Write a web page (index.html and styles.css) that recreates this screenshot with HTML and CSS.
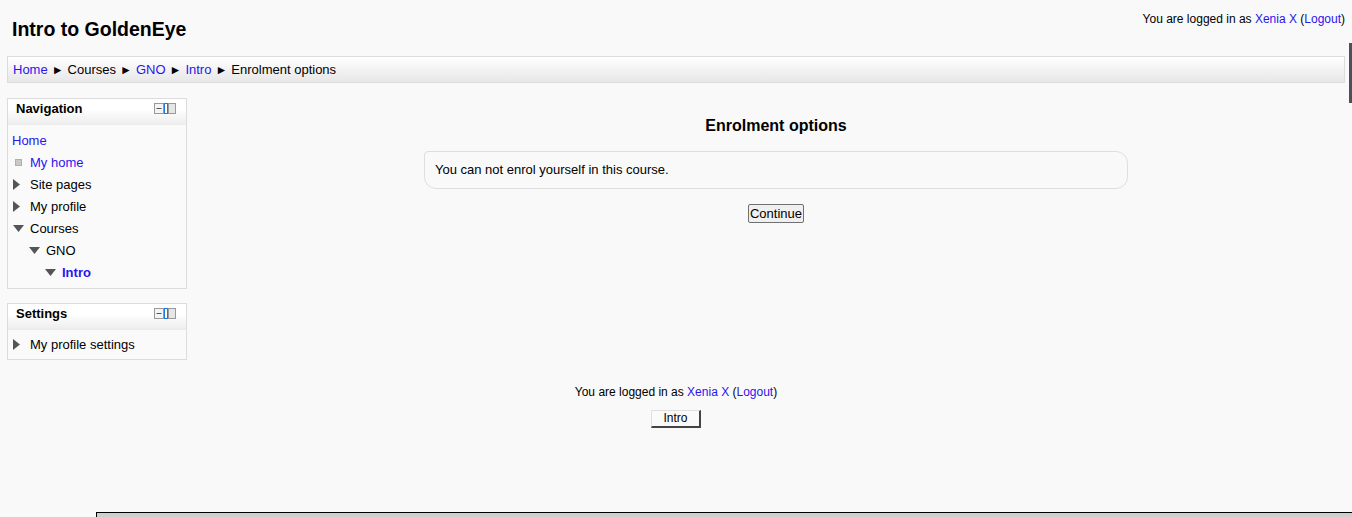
FILE: index.html
```html
<!DOCTYPE html>
<html>
<head>
<meta charset="utf-8">
<title>Intro to GoldenEye</title>
<link rel="stylesheet" href="styles.css">
</head>
<body>
<div class="page">
  <header class="header">
    <h1 class="title">Intro to GoldenEye</h1>
    <div class="login">You are logged in as <a href="#">Xenia X</a> (<a href="#">Logout</a>)</div>
  </header>
  <nav class="crumbs">
    <a href="#">Home</a><span class="sep">►</span><span>Courses</span><span class="sep">►</span><a href="#">GNO</a><span class="sep">►</span><a href="#">Intro</a><span class="sep">►</span><span>Enrolment options</span>
  </nav>
  <div class="content">
    <aside class="side">
      <section class="block">
        <div class="block-head">
          <span class="block-title">Navigation</span>
          <svg class="block-icons" width="23" height="12" viewBox="0 0 23 12"><rect x="0.5" y="0.5" width="9" height="10" fill="#f4f4f4" stroke="#999"/><line x1="2.5" y1="5.5" x2="7.5" y2="5.5" stroke="#555"/><rect x="10.5" y="0.5" width="3" height="10" fill="#fff" stroke="#1f7ae0"/><rect x="14.5" y="0.5" width="7" height="10" fill="#e6e6e6" stroke="#999"/></svg>
        </div>
        <ul class="tree">
          <li class="lvl0"><a href="#">Home</a></li>
          <li class="lvl1"><span class="ico"><span class="sq"></span></span><a href="#">My home</a></li>
          <li class="lvl1"><span class="ico"><svg width="7" height="11" viewBox="0 0 7 11"><path d="M0 0 L7 5.5 L0 11 Z" fill="#555"/></svg></span>Site pages</li>
          <li class="lvl1"><span class="ico"><svg width="7" height="11" viewBox="0 0 7 11"><path d="M0 0 L7 5.5 L0 11 Z" fill="#555"/></svg></span>My profile</li>
          <li class="lvl1"><span class="ico"><svg width="11" height="7" viewBox="0 0 11 7"><path d="M0 0 L11 0 L5.5 7 Z" fill="#555"/></svg></span>Courses</li>
          <li class="lvl2"><span class="ico"><svg width="11" height="7" viewBox="0 0 11 7"><path d="M0 0 L11 0 L5.5 7 Z" fill="#555"/></svg></span>GNO</li>
          <li class="lvl3"><span class="ico"><svg width="11" height="7" viewBox="0 0 11 7"><path d="M0 0 L11 0 L5.5 7 Z" fill="#555"/></svg></span><a href="#" class="current">Intro</a></li>
        </ul>
      </section>
      <section class="block">
        <div class="block-head">
          <span class="block-title">Settings</span>
          <svg class="block-icons" width="23" height="12" viewBox="0 0 23 12"><rect x="0.5" y="0.5" width="9" height="10" fill="#f4f4f4" stroke="#999"/><line x1="2.5" y1="5.5" x2="7.5" y2="5.5" stroke="#555"/><rect x="10.5" y="0.5" width="3" height="10" fill="#fff" stroke="#1f7ae0"/><rect x="14.5" y="0.5" width="7" height="10" fill="#e6e6e6" stroke="#999"/></svg>
        </div>
        <ul class="tree tree-short">
          <li class="lvl1"><span class="ico"><svg width="7" height="11" viewBox="0 0 7 11"><path d="M0 0 L7 5.5 L0 11 Z" fill="#555"/></svg></span>My profile settings</li>
        </ul>
      </section>
    </aside>
    <main class="main">
      <h2 class="heading">Enrolment options</h2>
      <div class="box">You can not enrol yourself in this course.</div>
      <div class="actions"><button class="btn">Continue</button></div>
    </main>
  </div>
  <footer class="footer">
    <div class="footlogin">You are logged in as <a href="#">Xenia X</a> (<a href="#">Logout</a>)</div>
    <div class="homelink"><button class="introbtn">Intro</button></div>
  </footer>
</div>
<div class="scrollthumb"></div>
<div class="dock"></div>
</body>
</html>
```
FILE: styles.css
```css
html, body {
  margin: 0;
  padding: 0;
  background: #f9f9f9;
  height: 517px;
  overflow: hidden;
}
body {
  font-family: "Liberation Sans", Arial, sans-serif;
  font-size: 13px;
  color: #000;
  position: relative;
}
a {
  color: #2a14f0;
  text-decoration: none;
}
.page {
  padding: 0 7px;
}
.header {
  display: flex;
  justify-content: space-between;
  align-items: flex-start;
  height: 56px;
}
.title {
  margin: 17px 0 0 5px;
  font-size: 19.5px;
  line-height: 24px;
  font-weight: bold;
}
.login {
  margin-top: 12px;
  font-size: 12px;
  line-height: 15px;
}
.crumbs {
  height: 25px;
  line-height: 25px;
  border: 1px solid #dcdcdc;
  background: linear-gradient(#ffffff, #e7e7e7);
  padding-left: 5px;
  font-size: 13px;
}
.crumbs .sep {
  margin: 0 4px;
  font-size: 12px;
}
.content {
  display: flex;
  margin-top: 15px;
}
.side {
  width: 180px;
  flex: none;
  display: flex;
  flex-direction: column;
  gap: 14px;
}
.block {
  border: 1px solid #dcdcdc;
  background: #fafafa;
}
.block-head {
  height: 24px;
  display: flex;
  align-items: flex-start;
  justify-content: space-between;
  padding: 2px 9px 0 8px;
  background: linear-gradient(#ffffff 40%, #ececec);
}
.block-title {
  font-weight: bold;
  font-size: 13px;
  line-height: 16px;
}
.block-icons {
  display: block;
  margin-top: 2px;
}
.tree {
  list-style: none;
  margin: 0;
  padding: 4px 0 5px 0;
}
.tree-short {
  padding: 3px 0 4px 0;
}
.tree li {
  display: flex;
  align-items: center;
  height: 22px;
  font-size: 13px;
}
.tree .lvl0 { padding-left: 4px; }
.tree .lvl1 { padding-left: 4px; }
.tree .lvl2 { padding-left: 20px; }
.tree .lvl3 { padding-left: 36px; }
.ico {
  width: 18px;
  flex: none;
  display: flex;
  align-items: center;
  padding-left: 1px;
  box-sizing: border-box;
}
.ico svg { display: block; }
.sq {
  width: 5px;
  height: 5px;
  background: #c8c8c8;
  border: 1px solid #b0b0b0;
  margin-left: 2px;
}
.current {
  font-weight: bold;
}
.main {
  flex: 1;
  padding-left: 20px;
  display: flex;
  flex-direction: column;
  align-items: center;
}
.heading {
  margin: 18px 0 0 0;
  font-size: 16px;
  line-height: 20px;
  font-weight: bold;
}
.box {
  margin-top: 15px;
  width: 692px;
  height: 36px;
  line-height: 36px;
  border: 1px solid #dedede;
  border-radius: 4px 12px 12px 12px;
  padding-left: 10px;
  font-size: 13px;
  background: #f9f9f9;
}
.actions {
  margin-top: 15px;
}
.btn {
  font-family: "Liberation Sans", Arial, sans-serif;
  font-size: 13px;
  height: 19px;
  padding: 0 1px;
  border: 1px solid #707070;
  border-radius: 2px;
  background: #f0f0f0;
  color: #000;
  line-height: 15px;
}
.footer {
  margin-top: 25px;
  display: flex;
  flex-direction: column;
  align-items: center;
}
.footlogin {
  font-size: 12px;
  line-height: 15px;
}
.homelink {
  margin-top: 10px;
}
.introbtn {
  font-family: "Liberation Sans", Arial, sans-serif;
  font-size: 12px;
  width: 50px;
  height: 18px;
  line-height: 13px;
  padding: 0;
  background: #fafafa;
  border-style: solid;
  border-width: 1px 2px 2px 1px;
  border-color: #e0e0e0 #444 #444 #e0e0e0;
  color: #000;
}
.scrollthumb {
  position: absolute;
  right: 0;
  top: 43px;
  width: 3px;
  height: 60px;
  background: #4d4f5a;
}
.dock {
  position: absolute;
  left: 96px;
  right: 0;
  top: 512px;
  height: 10px;
  border-top: 1px solid #000;
  border-left: 1px solid #000;
  background: #cfcfcf;
}
```
